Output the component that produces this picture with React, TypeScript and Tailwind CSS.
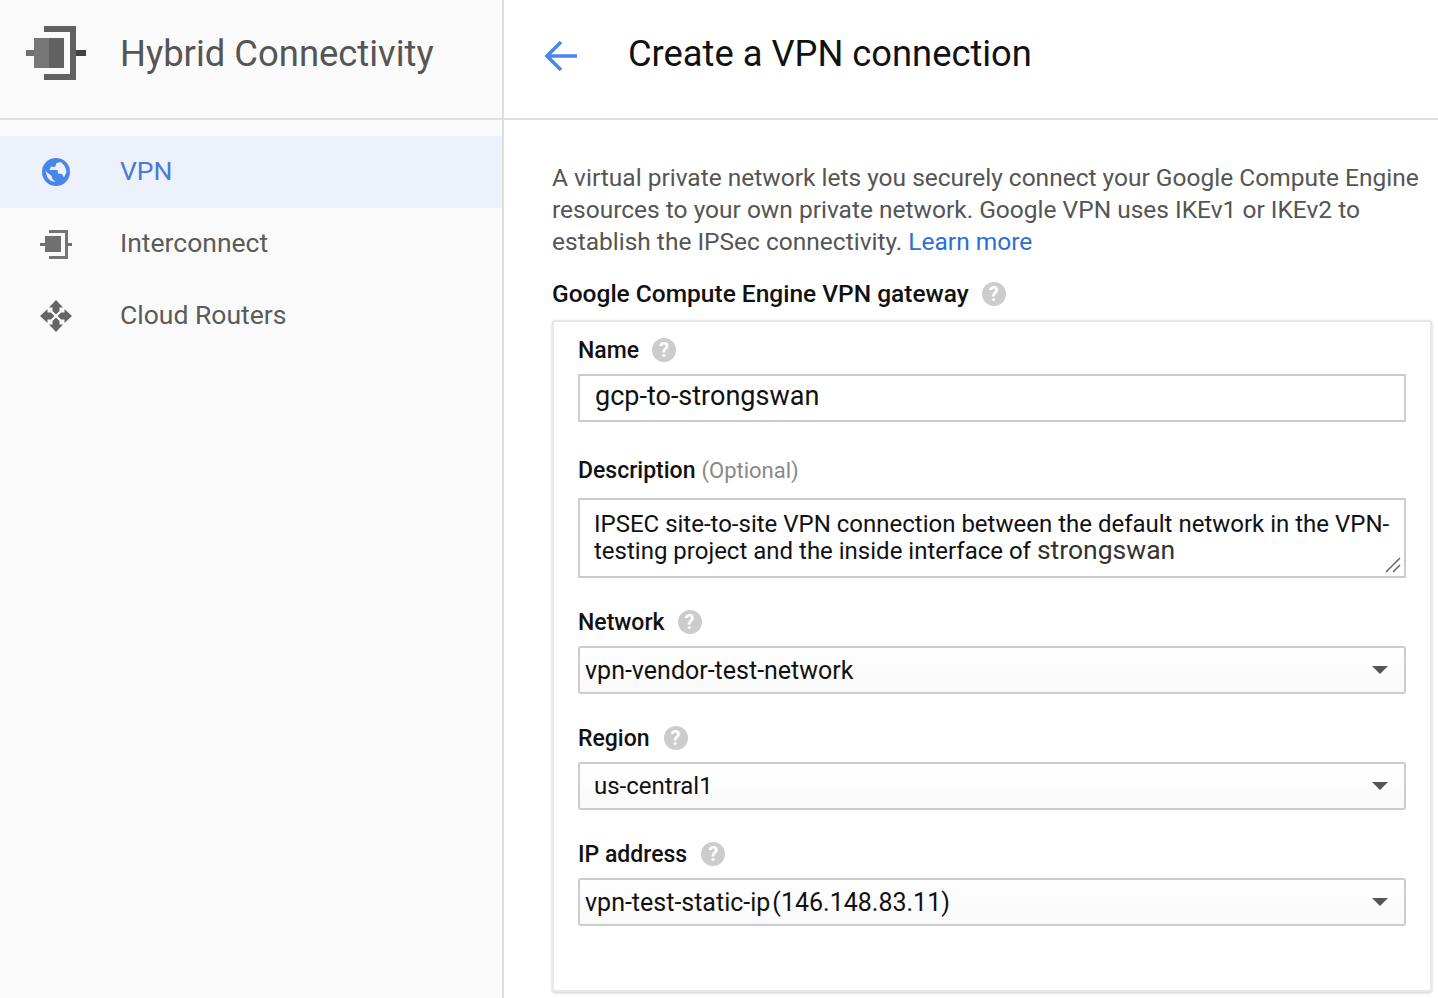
import React from 'react';

const HelpIcon = ({ offset = 'ml-[13px]' }: { offset?: string }) => (
  <span className={`${offset} flex h-6 w-6 shrink-0 items-center justify-center rounded-full bg-[#cccccc] text-[20px] leading-none font-bold text-white`}>
    ?
  </span>
);

const FieldLabel = ({ children, offset }: { children: React.ReactNode; offset?: string }) => (
  <div className="flex h-6 items-center text-[23px] leading-6 font-medium text-[#111111]">
    <span className="mt-[2px]">{children}</span>
    <HelpIcon offset={offset} />
  </div>
);

const SelectBox = ({ children }: { children: React.ReactNode }) => (
  <div className="mt-3 flex h-12 items-center justify-between rounded-[3px] border-2 border-[#cccccc] bg-gradient-to-b from-white to-[#f9f9f9] pr-[16px]">
    {children}
    <svg width="16" height="8" viewBox="0 0 16 8">
      <path d="M0 0h16L8 8z" fill="#555555" />
    </svg>
  </div>
);

const BridgeIcon = () => (
  <svg width="60" height="54" viewBox="0 0 60 54">
    <path d="M0 24h8v6H0z" fill="#707070" />
    <path d="M8 12h15v30H8z" fill="#777777" />
    <path d="M23 12h15v30H23z" fill="#616161" />
    <path d="M18 0h32v54H18v-6h26V6H18z" fill="#616161" />
    <path d="M50 24h10v6H50z" fill="#424242" />
  </svg>
);

const NavItem = ({ icon, label, active }: { icon: React.ReactNode; label: string; active?: boolean }) => (
  <div className={`flex h-[72px] items-center ${active ? 'bg-[#ecf1fb] text-[#4a79dc]' : 'text-[#5b5b5b]'}`}>
    <span className="flex w-[120px] shrink-0 justify-center pr-[8px]">{icon}</span>
    <span className="mb-[2px] text-[26.500px] leading-8">{label}</span>
  </div>
);

export default function App() {
  return (
    <div className="flex h-[998px] w-[1438px] overflow-hidden bg-white font-['Roboto',sans-serif]">
      {/* Sidebar */}
      <aside className="w-[504px] shrink-0 border-r-2 border-[#dedede] bg-[#fafafa]">
        <header className="flex h-[120px] items-center border-b-2 border-[#dedede] pb-[10px] pl-[26px]">
          <span className="mb-[2px] flex">
            <BridgeIcon />
          </span>
          <h1 className="ml-[34px] text-[36.400px] leading-[44px] text-[#555555]">Hybrid Connectivity</h1>
        </header>
        <nav className="pt-[16px]">
          <NavItem
            active
            label="VPN"
            icon={
              <svg width="28" height="28" viewBox="0 0 28 28">
                <circle cx="14" cy="14" r="14" fill="#4a85ea" />
                <path fill="#ecf1fb" d="M9 8.500l4 .5 1.500-4 4.500-1 4 4.500 1.500 5.500-2.500 5.500-2-3.500-4-.5-.5-3.500H7.500z" />
                <path fill="#ecf1fb" d="M3.500 13l6 5 1 3 3 3-4.500-1-3.500-3.500z" />
              </svg>
            }
          />
          <NavItem
            label="Interconnect"
            icon={
              <svg width="32" height="29" viewBox="0 0 32 29">
                <path d="M0 13h5v3H0z" fill="#707070" />
                <path d="M5 6h16v16H5z" fill="#707070" />
                <path d="M9 0h19v29H9v-3h16V3H9z" fill="#757575" />
                <path d="M28 13h4v3h-4z" fill="#707070" />
              </svg>
            }
          />
          <NavItem
            label="Cloud Routers"
            icon={
              <svg width="32" height="32" viewBox="0 0 32 32">
                <g fill="#666666">
                  <path d="M16 0l7 7.500h-3.500V11L16 14.500 12.500 11V7.500H9z" />
                  <path d="M16 32l-7-7.500h3.500V21l3.500-3.500 3.500 3.500v3.500H23z" />
                  <path d="M0 16l7.500-7v3.500H11l3.500 3.500-3.500 3.500H7.500V23z" />
                  <path d="M32 16l-7.500 7v-3.500H21L17.500 16l3.500-3.500h3.500V9z" />
                </g>
              </svg>
            }
          />
        </nav>
      </aside>

      {/* Main */}
      <main className="min-w-0 flex-1">
        <header className="flex h-[120px] items-center border-b-2 border-[#dedede] pb-[10px] pl-[40px]">
          <svg className="mt-[4px]" width="34" height="32" viewBox="0 0 34 32" fill="none">
            <path d="M33 16H3M17 2L3 16l14 14" stroke="#4a85ea" strokeWidth="3.500" />
          </svg>
          <h2 className="ml-[50px] text-[36.300px] leading-[44px] text-[#111111]">Create a VPN connection</h2>
        </header>

        <div className="pt-[42px] pl-[48px]">
          <p className="w-[880px] text-[24.500px] leading-8 text-[#555555]">
            A virtual private network lets you securely connect your Google Compute Engine resources to your own private network. Google VPN uses IKEv1 or IKEv2 to establish the IPSec connectivity.{' '}
            <span className="text-[#2a6fd6]">Learn more</span>
          </p>

          <div className="mt-[24px] flex h-6 items-center text-[24.500px] leading-6 font-medium text-[#111111]">
            Google Compute Engine VPN gateway
            <HelpIcon />
          </div>

          <section className="mt-[14px] h-[672px] w-[880px] rounded-[3px] border-2 border-[#e8e8e8] bg-white px-[24px] pt-[16px] shadow-[0_1px_3px_rgba(0,0,0,0.2)]">
            <FieldLabel>Name</FieldLabel>
            <div className="mt-3 flex h-12 items-center border-2 border-[#cccccc] pb-[4px] pl-[15px] text-[27px] text-[#111111]">
              gcp-to-strongswan
            </div>

            <div className="mt-[36px] flex h-6 items-center text-[23px] leading-6 font-medium text-[#111111]">
              <span className="mt-[2px]">Description</span>
              <span className="mt-[2px] ml-[6px] text-[22px] font-normal text-[#888888]">(Optional)</span>
            </div>
            <div className="relative mt-4 h-20 border-2 border-[#cccccc] pt-[11px] pl-[14px] text-[24px] leading-[26px] text-[#111111]">
              IPSEC site-to-site VPN connection between the default network in the VPN-
              <br />
              testing project and the inside interface of <span className="text-[26.500px] text-[#333333]">strongswan</span>
              <svg className="absolute right-[3px] bottom-[3px]" width="16" height="16" viewBox="0 0 16 16" fill="none">
                <path d="M1 15L15 1M8 15l7-7" stroke="#666666" strokeWidth="1.500" />
              </svg>
            </div>

            <div className="mt-[32px]">
              <FieldLabel>Network</FieldLabel>
            </div>
            <SelectBox>
              <span className="mt-[2px] pl-[5px] text-[25px] leading-8 text-[#111111]">vpn-vendor-test-network</span>
            </SelectBox>

            <div className="mt-[32px]">
              <FieldLabel offset="ml-[14px]">Region</FieldLabel>
            </div>
            <SelectBox>
              <span className="pl-[14px] text-[24px] leading-8 text-[#111111]">us-central1</span>
            </SelectBox>

            <div className="mt-[32px]">
              <FieldLabel offset="ml-[14px]">IP address</FieldLabel>
            </div>
            <SelectBox>
              <span className="mt-[2px] flex gap-[2px] pl-[5px] text-[25px] leading-8 text-[#111111]">
                <span>vpn-test-static-ip</span>
                <span>(146.148.83.11)</span>
              </span>
            </SelectBox>
          </section>
        </div>
      </main>
    </div>
  );
}
